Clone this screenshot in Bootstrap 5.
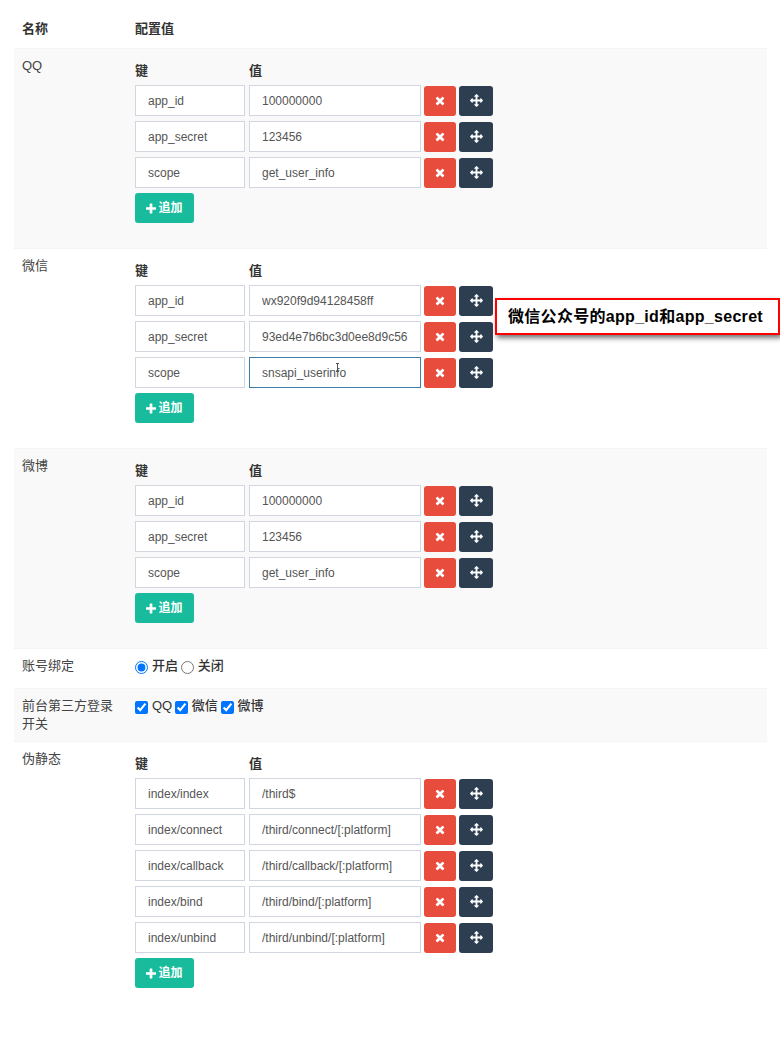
<!DOCTYPE html>
<html lang="zh">
<head>
<meta charset="utf-8">
<title>第三方登录配置</title>
<link href="https://cdn.jsdelivr.net/npm/bootstrap@5.3.0/dist/css/bootstrap.min.css" rel="stylesheet">
<style>
body{font-family:"Liberation Sans","Noto Sans CJK SC",sans-serif;font-size:13px;line-height:18.6px;color:#444;background:#fff}
.sheet{padding:10px 13px 0 14px;position:relative;height:1043px;overflow:hidden}
.cfg{width:753px;table-layout:fixed;margin:0;--bs-table-bg:transparent;--bs-table-color:#444;color:#444}
.cfg th,.cfg td{padding:8px;border:0;border-top:1px solid #f4f4f4;vertical-align:top;font-size:13px;line-height:18.6px}
.cfg thead th{border-top:0;border-bottom:1px solid #f4f4f4;height:38px;padding:10px 8px 8px;font-weight:700;color:#333}
.cfg tbody td{box-sizing:border-box}
.cfg tbody tr:nth-child(odd) td{background:#f9f9f9}
.h200{height:200px}
.h40{height:40px}
.cfg .h53 td{height:53px;padding-bottom:6px}
.namecol{width:113px}
.heads{height:28px;padding-top:5px;font-weight:700;color:#333;font-size:13px}
.kcol{width:110px;margin-right:4px}
.line{height:36px}
.inp{height:31px;border:1px solid #d2d6de;background:#fff;border-radius:0;padding:7px 12px 5px;font-size:12px;line-height:17px;color:#555;box-shadow:none;flex:none;font-family:inherit}
.inp.k{width:110px;margin-right:4px}
.inp.v{width:172px;margin-right:3px}
.inp.on{border-color:#3d7ea6}
.act{width:32px;height:30px;padding:0;border:0;border-radius:3px;margin-top:1px;display:flex;align-items:center;justify-content:center;flex:none}
.act svg{fill:#fff}
.del{background:#e74c3c;margin-right:3px}
.drag{background:#2c3e50;width:34px}
.addb{width:59px;height:30px;padding:2px 0 0;border:0;border-radius:3px;background:#18bc9c;color:#fff;font-size:12px;font-weight:700;display:flex;align-items:center;justify-content:center;gap:2px}
.addb svg{fill:#fff}
.opt{font-weight:500;color:#333;margin:0 -1px 0 0}
.opt input{margin:0 4px 0 0;vertical-align:-4px;width:13px;height:13px}
.note{position:absolute;left:495px;top:298px;width:285px;height:37px;border:2px solid #f00;background:#fff;color:#000;font-size:16px;font-weight:700;letter-spacing:.3px;line-height:33px;padding-left:11px;box-shadow:2px 3px 5px rgba(0,0,0,.55);white-space:nowrap}
.beam{position:absolute;left:336px;top:363px;width:3px;height:9px;border-top:1px solid #555;border-bottom:1px solid #555}
.beam::after{content:"";position:absolute;left:1px;top:0;bottom:0;width:1px;background:#555}
</style>
</head>
<body>
<svg width="0" height="0" class="d-block position-absolute">
<symbol id="ix" viewBox="0 0 1408 1792"><path d="M1298 1322q0 40-28 68l-136 136q-28 28-68 28t-68-28l-294-294-294 294q-28 28-68 28t-68-28l-136-136q-28-28-28-68t28-68l294-294-294-294q-28-28-28-68t28-68l136-136q28-28 68-28t68 28l294 294 294-294q28-28 68-28t68 28l136 136q28 28 28 68t-28 68l-294 294 294 294q28 28 28 68z"/></symbol>
<symbol id="ia" viewBox="0 0 1792 1792"><path d="M1792 896q0 26-19 45l-256 256q-19 19-45 19t-45-19-19-45v-128h-384v384h128q26 0 45 19t19 45-19 45l-256 256q-19 19-45 19t-45-19l-256-256q-19-19-19-45t19-45 45-19h128v-384h-384v128q0 26-19 45t-45 19-45-19l-256-256q-19-19-19-45t19-45l256-256q19-19 45-19t45 19 19 45v128h384v-384h-128q-26 0-45-19t-19-45 19-45l256-256q19-19 45-19t45 19l256 256q19 19 19 45t-19 45-45 19h-128v384h384v-128q0-26 19-45t45-19 45 19l256 256q19 19 19 45z"/></symbol>
<symbol id="ip" viewBox="0 0 1408 1792"><path d="M1408 800v192q0 40-28 68t-68 28h-416v416q0 40-28 68t-68 28h-192q-40 0-68-28t-28-68v-416h-416q-40 0-68-28t-28-68v-192q0-40 28-68t68-28h416v-416q0-40 28-68t68-28h192q40 0 68 28t28 68v416h416q40 0 68 28t28 68z"/></symbol>
</svg>
<div class="sheet">
<table class="table cfg">
<colgroup><col class="namecol"><col></colgroup>
<thead><tr><th>名称</th><th>配置值</th></tr></thead>
<tbody id="rows"></tbody>
</table>
<div class="note">微信公众号的app_id和app_secret</div>
<div class="beam"></div>
</div>
<script>
var A=[["app_id","100000000"],["app_secret","123456"],["scope","get_user_info"]];
var W=[["app_id","wx920f9d94128458ff"],["app_secret","93ed4e7b6bc3d0ee8d9c5677"],["scope","snsapi_userinfo",1]];
var R=[["index/index","/third$"],["index/connect","/third/connect/[:platform]"],["index/callback","/third/callback/[:platform]"],["index/bind","/third/bind/[:platform]"],["index/unbind","/third/unbind/[:platform]"]];
function list(a){
  var s='<div class="d-flex heads"><div class="kcol">键</div><div>值</div></div>';
  a.forEach(function(r){
    s+='<div class="d-flex line"><input class="inp k" value="'+r[0]+'"><input class="inp v'+(r[2]?' on':'')+'" value="'+r[1]+'">'
      +'<span class="act del"><svg width="10" height="13"><use href="#ix"/></svg></span>'
      +'<span class="act drag"><svg width="13" height="13"><use href="#ia"/></svg></span></div>';
  });
  return s+'<button type="button" class="addb"><svg width="10" height="13"><use href="#ip"/></svg>追加</button>';
}
function row(n,c,h){return '<tr class="'+h+'"><td>'+n+'</td><td>'+c+'</td></tr>';}
document.getElementById('rows').innerHTML=
 row('QQ',list(A),'h200')+row('微信',list(W),'h200')+row('微博',list(A),'h200')
 +row('账号绑定','<label class="opt"><input type="radio" name="b" checked>开启</label> <label class="opt"><input type="radio" name="b">关闭</label>','h40')
 +row('前台第三方登录开关','<label class="opt"><input type="checkbox" checked>QQ</label> <label class="opt"><input type="checkbox" checked>微信</label> <label class="opt"><input type="checkbox" checked>微博</label>','h53')
 +row('伪静态',list(R),'');
</script>
</body>
</html>
